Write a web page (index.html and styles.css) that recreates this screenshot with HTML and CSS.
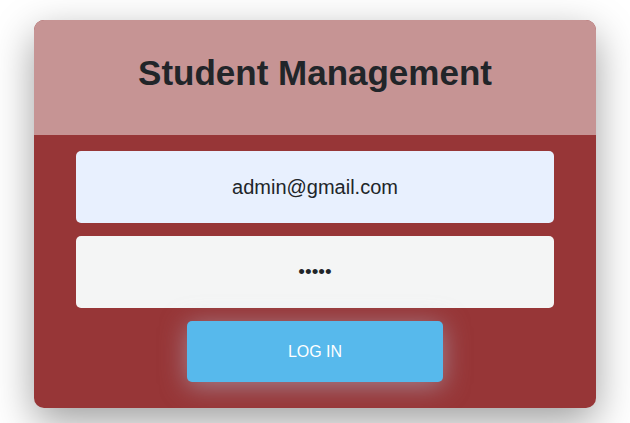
FILE: index.html
```html
<!DOCTYPE html>
<html>
<head>
<meta charset="utf-8">
<link rel="stylesheet" href="styles.css">
</head>
<body>
<div class="card">
  <div class="card-header">
    <h1 class="title">Student Management</h1>
  </div>
  <form class="card-body">
    <input class="field field-email" type="text" value="admin@gmail.com">
    <input class="field field-pass" type="password" value="admin">
    <button class="btn" type="button">LOG IN</button>
  </form>
</div>
</body>
</html>
```

FILE: styles.css
```css
html, body {
  margin: 0;
  padding: 0;
  background: #ffffff;
  font-family: "Liberation Sans", Arial, sans-serif;
}
html {
  height: 100%;
}
body {
  box-sizing: border-box;
  min-height: 100%;
  display: flex;
  justify-content: center;
  align-items: flex-start;
  padding-top: 20px;
  overflow: hidden;
}
.card {
  width: 562px;
  border-radius: 10px;
  overflow: hidden;
  box-shadow: 0 14px 40px rgba(0, 0, 0, 0.38);
  background: #973637;
}
.card-header {
  height: 115px;
  background: #c69494;
  display: flex;
  align-items: center;
  justify-content: center;
}
.title {
  margin: 0;
  margin-top: -9px;
  font-size: 35px;
  font-weight: bold;
  color: #212529;
}
.card-body {
  margin: 0;
  padding: 16px 42px 26px;
  display: flex;
  flex-direction: column;
  align-items: center;
  gap: 13px;
}
.field {
  box-sizing: border-box;
  width: 100%;
  height: 72px;
  border: none;
  border-radius: 5px;
  outline: none;
  text-align: center;
  font-family: "Liberation Sans", Arial, sans-serif;
  font-size: 20px;
  color: #212529;
}
.field-email {
  background: #e8f0fe;
}
.field-pass {
  background: #f4f5f5;
  font-size: 19px;
}
.btn {
  width: 256px;
  height: 61px;
  border: none;
  border-radius: 5px;
  background: #57b9ec;
  color: #ffffff;
  font-family: "Liberation Sans", Arial, sans-serif;
  font-size: 16px;
  box-shadow: 0 4px 26px rgba(175, 180, 200, 0.6);
}
```
